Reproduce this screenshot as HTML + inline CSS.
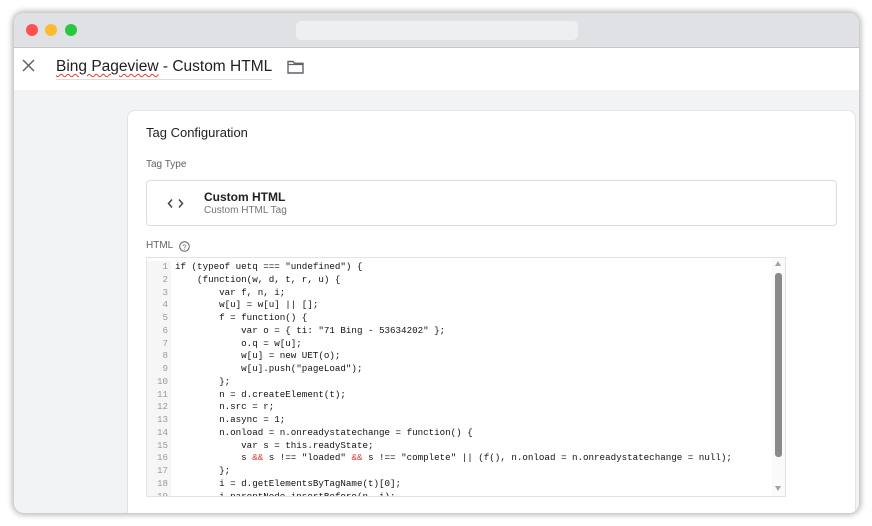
<!DOCTYPE html>
<html><head><meta charset="utf-8">
<style>
*{margin:0;padding:0;box-sizing:border-box}
body{width:872px;height:526px;background:#fff;position:relative;overflow:hidden;font-family:"Liberation Sans",Arial,sans-serif}
.win{position:absolute;left:14px;top:13px;width:845px;height:500px;border-radius:10px;overflow:hidden;background:#f1f3f4;box-shadow:0 0 6px 2px rgba(0,0,0,.28)}
.tb{position:absolute;left:0;top:0;right:0;height:35px;background:#dfe1e5;border-bottom:1px solid #c8c8c8}
.dot{position:absolute;top:11px;width:12px;height:12px;border-radius:50%}
.url{position:absolute;left:282px;top:8px;width:282px;height:19px;border-radius:5px;background:#eeeff1}
.hdr{position:absolute;left:0;top:35px;right:0;height:42px;background:#fff}
.title{position:absolute;left:42px;top:10px;font-size:15.5px;color:#202124;border-bottom:1px solid #ddd;padding-bottom:3px}
.sq{text-decoration:underline wavy #e53935;text-decoration-thickness:1px;text-underline-offset:2px}
.card{position:absolute;left:113px;top:97px;width:729px;height:420px;background:#fff;border-radius:8px;border:1px solid #e3e3e3}
.mono{font-family:"Liberation Mono",monospace;font-size:9.2px;line-height:12.75px;white-space:pre;color:#111}
.r{color:#e53935}
</style></head><body>
<div class="win">
  <div class="tb">
    <div class="dot" style="left:12px;background:#fe5150"></div>
    <div class="dot" style="left:31px;background:#fdbb2e"></div>
    <div class="dot" style="left:51px;background:#27c83f"></div>
    <div class="url"></div>
  </div>
  <div class="hdr">
    <svg style="position:absolute;left:8px;top:11px" width="13" height="13" viewBox="0 0 13 13"><path d="M1 1L12 12M12 1L1 12" stroke="#5f6368" stroke-width="1.5"/></svg>
    <div class="title"><span class="sq">Bing Pageview</span> - Custom HTML</div>
    <svg style="position:absolute;left:273px;top:12px" width="17" height="14" viewBox="0 0 17 14"><path d="M1 1.5h5l1.5 1.8H16V13H1z" fill="none" stroke="#5f6368" stroke-width="1.4"/><path d="M1 4.5h15" stroke="#5f6368" stroke-width="1.2"/></svg>
  </div>
  <div class="card">
    <div style="position:absolute;left:18px;top:14px;font-size:13px;color:#202124">Tag Configuration</div>
    <div style="position:absolute;left:18px;top:48px;font-size:10px;color:#5f6368">Tag Type</div>
    <div style="position:absolute;left:18px;top:69px;width:691px;height:46px;border:1px solid #dadce0;border-radius:4px">
      <svg style="position:absolute;left:20px;top:17px" width="17" height="11" viewBox="0 0 17 11"><path d="M5 1.5L1.5 5.5L5 9.5M12 1.5L15.5 5.5L12 9.5" fill="none" stroke="#444" stroke-width="1.5"/></svg>
      <div style="position:absolute;left:57px;top:9px;font-size:12px;color:#202124;font-weight:bold">Custom HTML</div>
      <div style="position:absolute;left:57px;top:24px;font-size:10px;color:#70757a">Custom HTML Tag</div>
    </div>
    <div style="position:absolute;left:18px;top:129px;font-size:10px;color:#5f6368">HTML</div>
    <svg style="position:absolute;left:51px;top:130px" width="11" height="11" viewBox="0 0 11 11"><circle cx="5.5" cy="5.5" r="4.8" fill="none" stroke="#5f6368" stroke-width="1"/><text x="5.5" y="8.3" font-size="7.5" text-anchor="middle" fill="#5f6368" font-family="Liberation Sans">?</text></svg>
    <div style="position:absolute;left:18px;top:146px;width:640px;height:240px;border:1px solid #e3e3e3;overflow:hidden;background:#fff">
      <div class="mono" style="position:absolute;left:0;top:3px;width:24px;height:260px;background:#f6f6f6;text-align:right;padding-right:3px;color:#999">1
2
3
4
5
6
7
8
9
10
11
12
13
14
15
16
17
18
19</div>
      <div class="mono" style="position:absolute;left:28px;top:3px">if (typeof uetq === "undefined") {
    (function(w, d, t, r, u) {
        var f, n, i;
        w[u] = w[u] || [];
        f = function() {
            var o = { ti: "71 Bing - 53634202" };
            o.q = w[u];
            w[u] = new UET(o);
            w[u].push("pageLoad");
        };
        n = d.createElement(t);
        n.src = r;
        n.async = 1;
        n.onload = n.onreadystatechange = function() {
            var s = this.readyState;
            s <span class="r">&amp;&amp;</span> s !== "loaded" <span class="r">&amp;&amp;</span> s !== "complete" || (f(), n.onload = n.onreadystatechange = null);
        };
        i = d.getElementsByTagName(t)[0];
        i.parentNode.insertBefore(n, i);</div>
      <div style="position:absolute;right:0;top:0;width:13px;height:240px;background:#fafafa"></div>
      <div style="position:absolute;right:4px;top:3px;width:0;height:0;border-left:3.5px solid transparent;border-right:3.5px solid transparent;border-bottom:5px solid #a3a3a3"></div>
      <div style="position:absolute;right:3px;top:15px;width:7px;height:184px;border-radius:3px;background:#8a8a8a"></div>
      <div style="position:absolute;right:4px;bottom:5px;width:0;height:0;border-left:3.5px solid transparent;border-right:3.5px solid transparent;border-top:5px solid #a3a3a3"></div>
    </div>
  </div>
</div>
</body></html>
